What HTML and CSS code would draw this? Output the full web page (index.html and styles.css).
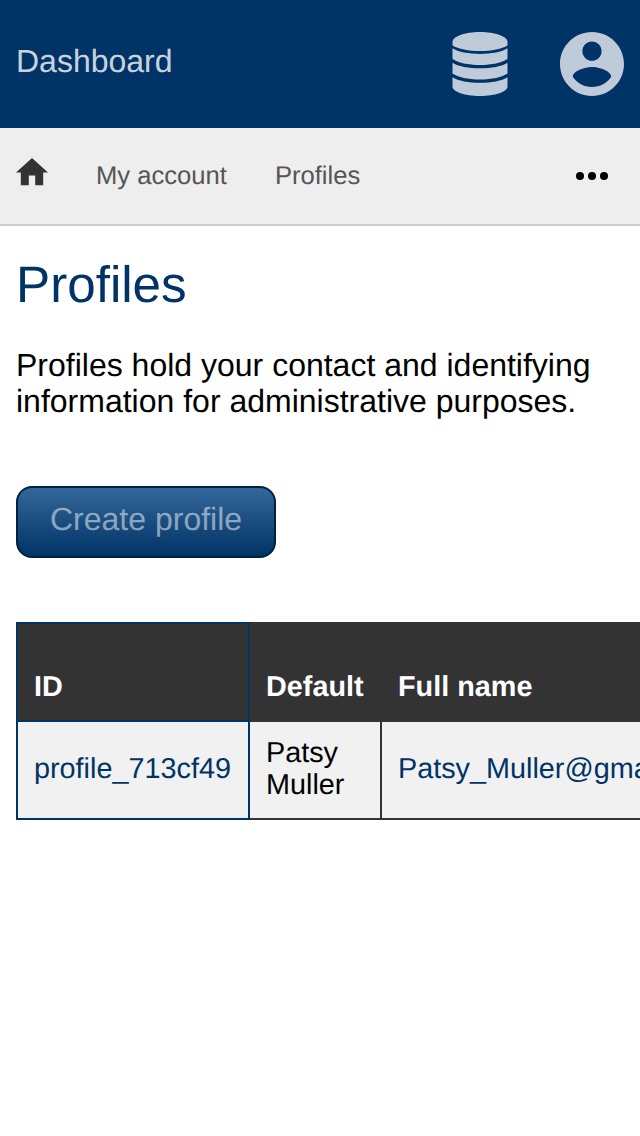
FILE: index.html
```html
<!DOCTYPE html>
<html lang="en">
<head>
<meta charset="utf-8">
<title>Profiles</title>
<link rel="stylesheet" href="styles.css">
</head>
<body>
<header class="topbar">
  <a class="brand">Dashboard</a>
  <div class="tools">
    <svg class="icon-db" viewBox="0 0 56 64" width="56" height="64">
      <path d="M.5 10C.5 4.500 12.500 0 28 0s27.500 4.500 27.500 10v3.400C50 16.900 39.500 18.900 28 18.900S6 16.900 .5 13.400z"/>
      <path d="M.5 16.200C6 19.800 16.500 21.900 28 21.900s22-2.100 27.500-5.700v10.900C50 30.800 40 33.100 28 33.100S6 30.800 .5 27.100z"/>
      <path d="M.5 30.700C6 34.300 16.500 36.300 28 36.300s22-2 27.500-5.600v10.900C50 45.300 40 47.600 28 47.600S6 45.300 .5 41.600z"/>
      <path d="M.5 45.200C6 48.800 16.500 50.800 28 50.800s22-2 27.500-5.600v9.300C55.500 59.800 43.500 64 28 64S.5 59.800 .5 54.500z"/>
    </svg>
    <svg class="icon-user" viewBox="2 2 20 20" width="64" height="64">
      <path d="M12 2C6.480 2 2 6.480 2 12s4.480 10 10 10 10-4.480 10-10S17.520 2 12 2zm0 3c1.660 0 3 1.340 3 3s-1.340 3-3 3-3-1.340-3-3 1.340-3 3-3zm0 14.200c-2.500 0-4.710-1.280-6-3.220.03-1.990 4-3.080 6-3.080 1.990 0 5.970 1.090 6 3.080-1.290 1.940-3.500 3.220-6 3.220z"/>
    </svg>
  </div>
</header>
<nav class="crumbs">
  <svg class="icon-home" viewBox="2 3 20 17" width="32" height="27.2"><path d="M10 20v-6h4v6h5v-8h3L12 3 2 12h3v8z"/></svg>
  <a class="crumb">My account</a>
  <a class="crumb">Profiles</a>
  <svg class="icon-more" viewBox="0 0 32 8" width="32" height="8"><circle cx="4" cy="4" r="4"/><circle cx="16" cy="4" r="4"/><circle cx="28" cy="4" r="4"/></svg>
</nav>
<main class="content">
  <h1 class="title">Profiles</h1>
  <p class="intro">Profiles hold your contact and identifying information for administrative purposes.</p>
  <button class="create">Create profile</button>
  <table class="profiles">
    <colgroup><col class="col-id"><col class="col-default"><col class="col-name"></colgroup>
    <thead>
      <tr><th class="id">ID</th><th>Default</th><th>Full name</th></tr>
    </thead>
    <tbody>
      <tr><td class="id"><a class="link">profile_713cf49</a></td><td>Patsy Muller</td><td><a class="link">Patsy_Muller@gmail.com</a></td></tr>
    </tbody>
  </table>
</main>
</body>
</html>
```
FILE: styles.css
```css
* { box-sizing: border-box; }
html, body { margin: 0; overflow: hidden; }
body {
  min-height: 1136px;
  background: #fff;
  color: #000;
  font: 32px/36px "Liberation Sans", Arial, sans-serif;
  text-rendering: geometricPrecision;
}
svg { display: block; flex: none; }

.topbar {
  height: 128px;
  padding: 32px 16px;
  display: flex;
  justify-content: space-between;
  background: #036;
}
.brand { margin-top: 11px; color: rgba(255, 255, 255, .8); }
.tools { display: flex; gap: 52px; fill: rgba(255, 255, 255, .75); }

.crumbs {
  height: 98px;
  padding: 0 32px 0 16px;
  display: flex;
  align-items: center;
  gap: 48px;
  background: #eee;
  border-bottom: 2px solid #ccc;
  color: #555;
  font-size: 25.6px;
  line-height: 30px;
}
.crumb { white-space: nowrap; }
.icon-home { margin-bottom: 8px; fill: #333; }
.icon-more { margin-left: auto; fill: #000; }

.content { padding: 30px 16px 0; overflow: hidden; }
.title {
  margin: 0 0 33px;
  color: #036;
  font-size: 51.2px;
  line-height: 58px;
  font-weight: 400;
}
.intro { margin: 0 0 67px; }
.create {
  display: block;
  height: 72px;
  margin: 0 0 64px;
  padding: 0 32px 6px;
  border: 2px solid #002140;
  border-radius: 16px;
  background: linear-gradient(#369, #036);
  color: rgba(255, 255, 255, .5);
  font: inherit;
  text-rendering: inherit;
}

.profiles {
  width: 1000px;
  table-layout: fixed;
  border-collapse: collapse;
  font-size: 28.8px;
  line-height: 32px;
}
.col-id { width: 232px; }
.col-default { width: 132px; }
.profiles th,
.profiles td {
  height: 98px;
  padding: 15px 15px 17px 16px;
  border: 2px solid #333;
  text-align: left;
}
.profiles th {
  background: #333;
  color: #fff;
  vertical-align: bottom;
}
.profiles td { background: #f1f1f1; vertical-align: middle; }
.profiles .id { border-color: #036; }
.link { color: #036; }
```
